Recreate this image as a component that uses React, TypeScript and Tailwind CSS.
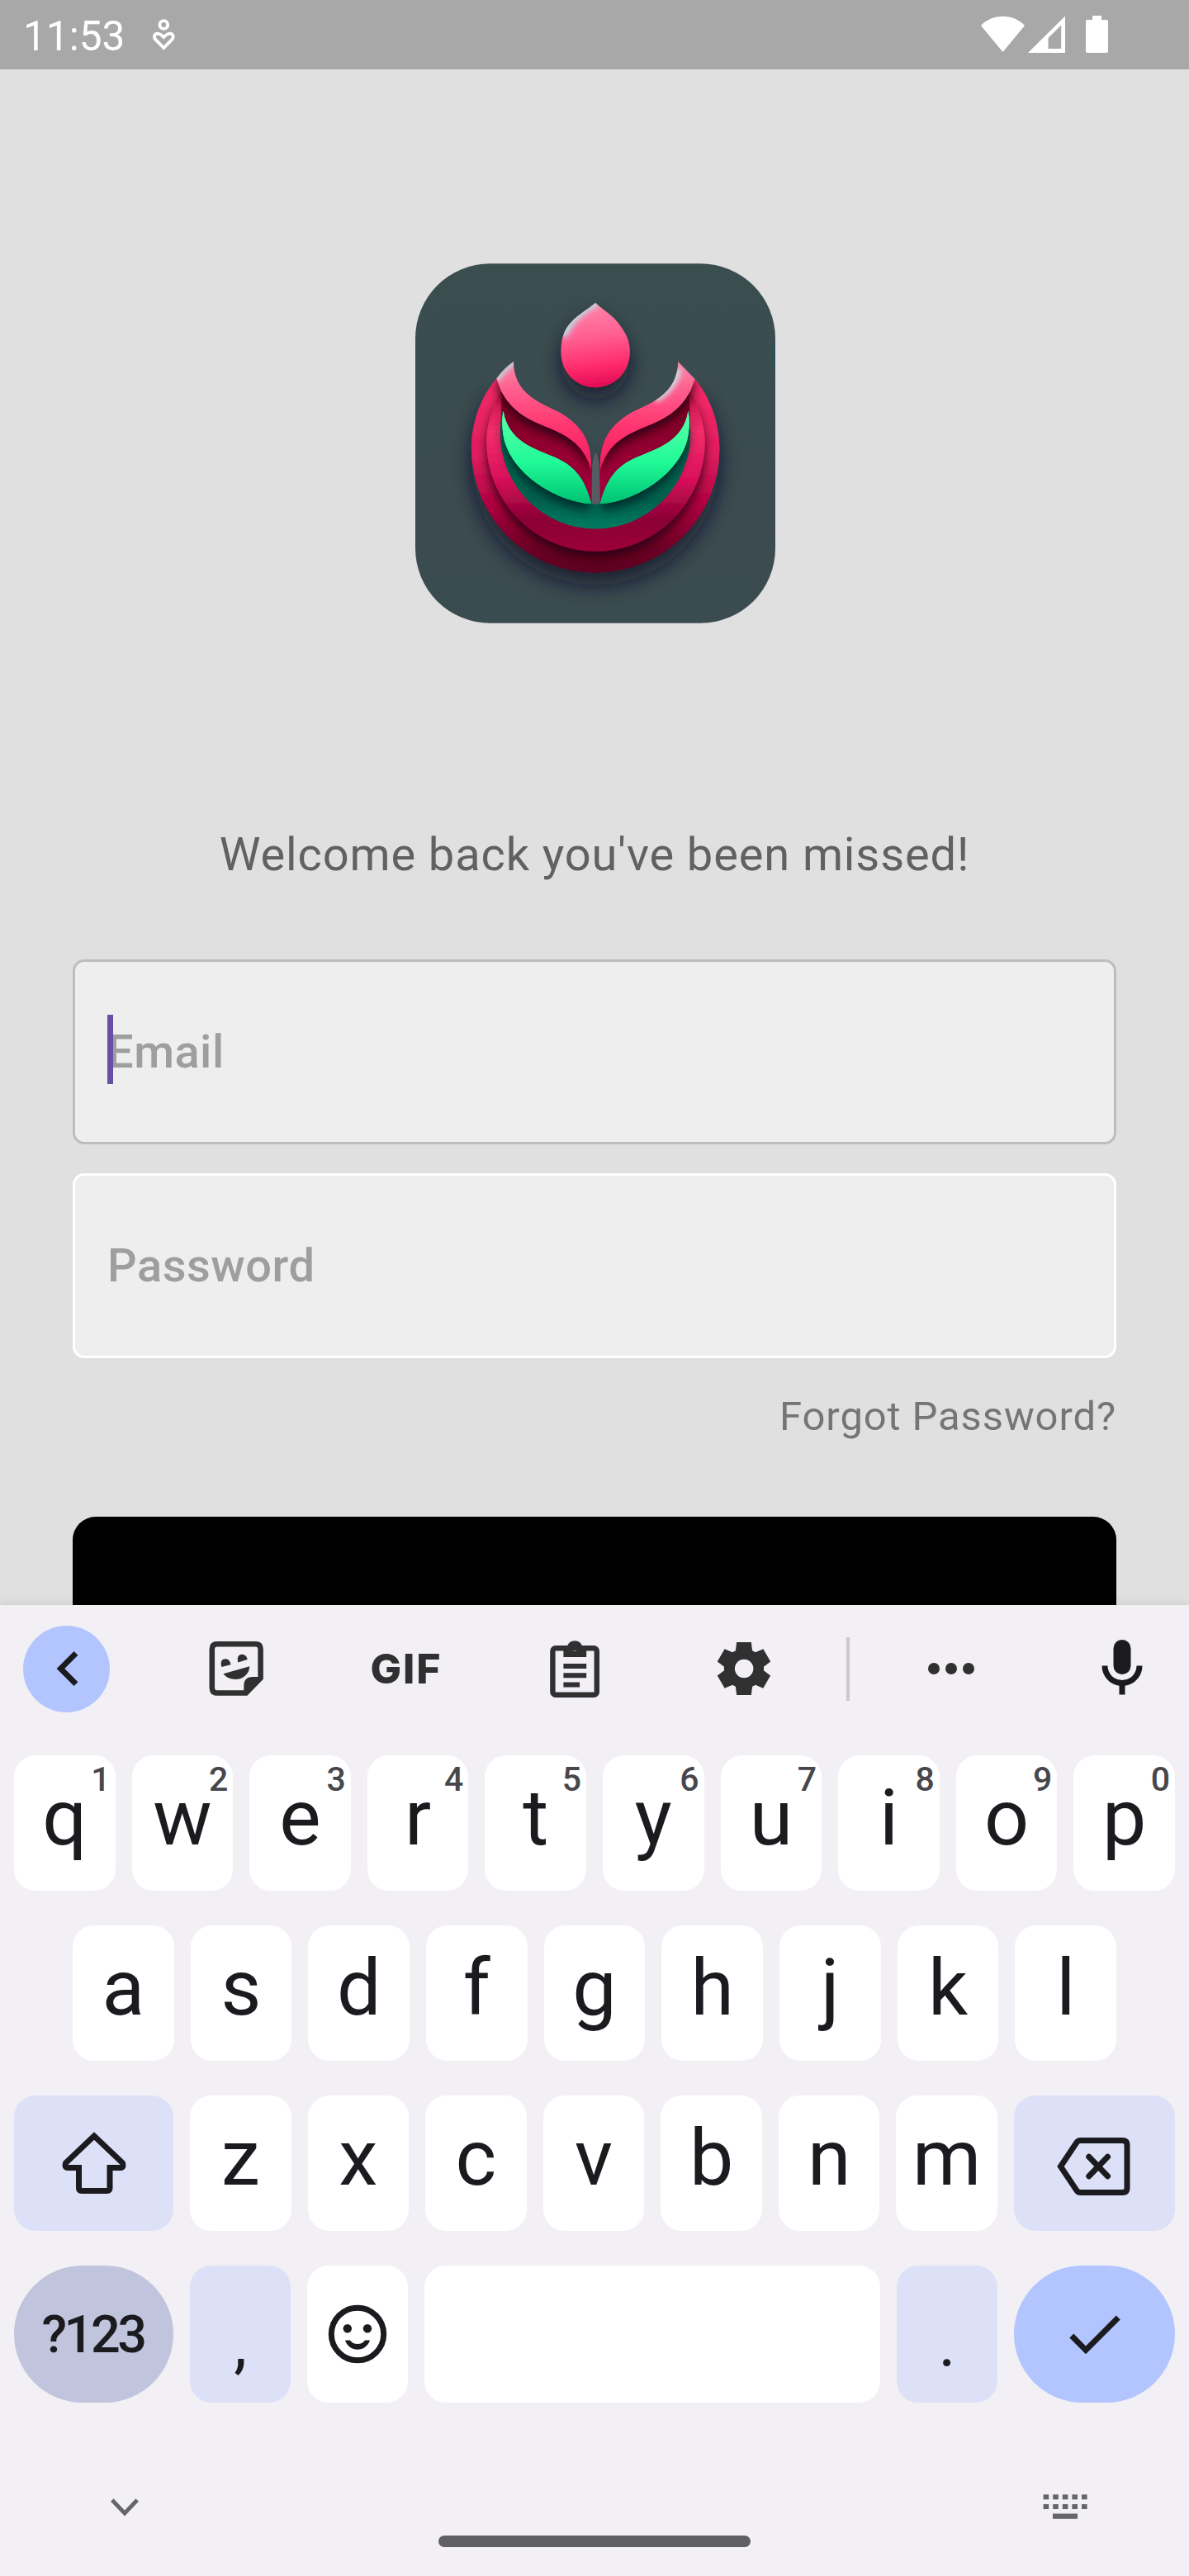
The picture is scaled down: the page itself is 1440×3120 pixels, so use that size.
import React from "react";

const INK = "#1b1b1f";
const TOOL = "#303030";

function StatusBar() {
  return (
    <header className="flex h-[84px] shrink-0 items-center bg-[#a8a8a8] text-white">
      <span className="ml-[28px] w-[150px] pt-[4px] text-[49.5px] leading-[49px]">11:53</span>
      <svg className="ml-[5px] h-[40px] w-[30px]" viewBox="182 22 30 40" fill="none" stroke="#fff" strokeWidth="3.8">
        <circle cx="197.3" cy="30" r="4.9" />
        <path d="M197.3 58 L187.6 48.2 C184.6 45 185.8 40.8 190 40.6 C193.4 40.6 194.6 42.6 197.3 45 C200 42.6 201.2 40.6 204.6 40.6 C208.8 40.8 210 45 207 48.2 Z" />
      </svg>
      <svg className="ml-auto mr-[97px] h-[46px] w-[156px]" viewBox="1187 19 156 46" fill="#fff">
        <path d="M1188 31 C1202 16 1227 16 1241 31 L1214.5 63 Z" />
        <path fillRule="evenodd" d="M1245 64 L1290 19.5 V64 Z M1269.5 46 V59 H1285.2 V30.5 Z" />
        <path d="M1323 19 H1334 V24 H1340 Q1342 24 1342 26 V62 Q1342 64 1340 64 H1317 Q1315 64 1315 62 V26 Q1315 24 1317 24 H1323 Z" />
      </svg>
    </header>
  );
}

const NOTCH_TOP =
  "C995 530 905 560 830 595 C740 645 705 710 710 810 L710 930 L680 930 L680 810 C685 710 650 645 560 595 C490 560 400 530 397 413";
const NOTCH_LOW =
  "C990 610 920 630 850 660 C780 690 730 730 710 810 L710 930 L680 930 L680 810 C660 730 610 690 540 660 C470 630 400 610 352 520";

function Logo() {
  return (
    <svg className="ml-[2px] h-[436px] w-[436px] shrink-0" viewBox="40 57 1309 1307">
      <defs>
        <linearGradient id="card" x1="0" y1="0" x2="0" y2="1">
          <stop offset="0" stopColor="#3a4d4f" />
          <stop offset="0.75" stopColor="#3b4b50" />
          <stop offset="1" stopColor="#3a4c4f" />
        </linearGradient>
        <linearGradient id="drop" x1="0.45" y1="0" x2="0.55" y2="1">
          <stop offset="0" stopColor="#ff86ab" />
          <stop offset="0.4" stopColor="#ff5f92" />
          <stop offset="0.75" stopColor="#ff2a6c" />
          <stop offset="1" stopColor="#e00a55" />
        </linearGradient>
        <linearGradient id="petal" gradientUnits="userSpaceOnUse" x1="0" y1="413" x2="0" y2="810">
          <stop offset="0" stopColor="#f58aab" />
          <stop offset="0.25" stopColor="#ff5f8e" />
          <stop offset="0.6" stopColor="#ff3570" />
          <stop offset="1" stopColor="#f01a5c" />
        </linearGradient>
        <linearGradient id="ring1" gradientUnits="userSpaceOnUse" x1="0" y1="475" x2="0" y2="1180">
          <stop offset="0" stopColor="#f52a68" />
          <stop offset="0.4" stopColor="#e01c60" />
          <stop offset="0.65" stopColor="#b00040" />
          <stop offset="0.87" stopColor="#6e0026" />
          <stop offset="1" stopColor="#5c0020" />
        </linearGradient>
        <linearGradient id="ring2" gradientUnits="userSpaceOnUse" x1="0" y1="520" x2="0" y2="1103">
          <stop offset="0" stopColor="#c01048" />
          <stop offset="0.25" stopColor="#f52d6c" />
          <stop offset="0.55" stopColor="#d8105a" />
          <stop offset="0.8" stopColor="#8a0034" />
          <stop offset="1" stopColor="#9c0038" />
        </linearGradient>
        <linearGradient id="dark" gradientUnits="userSpaceOnUse" x1="0" y1="560" x2="0" y2="900">
          <stop offset="0" stopColor="#7d0026" />
          <stop offset="0.6" stopColor="#980034" />
          <stop offset="1" stopColor="#b00040" />
        </linearGradient>
        <linearGradient id="moss" gradientUnits="userSpaceOnUse" x1="0" y1="600" x2="0" y2="1020">
          <stop offset="0" stopColor="#006b50" />
          <stop offset="0.75" stopColor="#00624e" />
          <stop offset="1" stopColor="#007a60" />
        </linearGradient>
        <linearGradient id="leaf" gradientUnits="userSpaceOnUse" x1="0" y1="595" x2="0" y2="930">
          <stop offset="0" stopColor="#5cffa8" />
          <stop offset="0.55" stopColor="#20fa98" />
          <stop offset="1" stopColor="#00c272" />
        </linearGradient>
        <filter id="far" x="-40%" y="-40%" width="180%" height="190%">
          <feDropShadow dx="0" dy="45" stdDeviation="38" floodColor="#101828" floodOpacity="0.75" />
        </filter>
        <filter id="near" x="-30%" y="-30%" width="160%" height="170%">
          <feDropShadow dx="0" dy="24" stdDeviation="17" floodColor="#26000e" floodOpacity="0.85" />
        </filter>
        <filter id="leafShade" x="-30%" y="-30%" width="160%" height="170%">
          <feDropShadow dx="0" dy="26" stdDeviation="18" floodColor="#06262c" floodOpacity="0.9" />
        </filter>
        <filter id="soft" x="-50%" y="-50%" width="200%" height="200%">
          <feGaussianBlur stdDeviation="9" />
        </filter>
        <path id="dropShape" d="M695 199 C722 226 760 242 789 288 C812 322 820 345 820 378 C820 450 765 507 695 507 C625 507 570 450 570 380 C570 340 576 314 592 288 C620 246 668 224 695 199 Z" />
        <path id="petalShape" d="M397 413 C400 530 490 560 560 595 C650 645 685 710 680 810 C660 730 610 690 540 660 C470 630 400 610 352 520 L335 475 Q362 436 397 413 Z" />
        <path id="leafShape" d="M360 593 C375 690 450 722 520 750 C600 780 650 815 680 930 C560 924 400 830 364 700 C354 655 355 620 360 593 Z" />
        <clipPath id="clipDrop"><use href="#dropShape" /></clipPath>
        <clipPath id="clipPetal"><use href="#petalShape" /></clipPath>
        <clipPath id="clipRing">
          <path d={"M335 475 C280 540 244 630 244 730 A451 451 0 0 0 1146 730 C1146 630 1110 540 1055 475 L995 413 " + NOTCH_TOP + " Z"} />
        </clipPath>
      </defs>
      <rect x="40" y="57" width="1309" height="1307" rx="272" fill="url(#card)" />
      <path d="M1346 330 Q1336 390 1346 460 Z" fill="#0e5a70" />

      <use href="#dropShape" fill="url(#drop)" filter="url(#far)" />
      <g clipPath="url(#clipDrop)">
        <path d="M575 320 Q610 235 700 195" fill="none" stroke="#b9dbe2" strokeWidth="34" filter="url(#soft)" />
      </g>

      <path
        d={"M335 475 C280 540 244 630 244 730 A451 451 0 0 0 1146 730 C1146 630 1110 540 1055 475 L1040 520 " + NOTCH_LOW + " Z"}
        fill="url(#ring1)"
        filter="url(#far)"
      />
      <g clipPath="url(#clipRing)">
        <path
          d={"M352 520 C320 580 299 640 299 706 A397 397 0 0 0 1093 706 C1093 640 1070 580 1040 520 " + NOTCH_LOW + " Z"}
          fill="url(#ring2)"
          filter="url(#near)"
        />
        <path
          d={"M354 522 C354 580 350 620 350 676 A345 345 0 0 0 1040 676 C1040 620 1036 580 1036 522 " + NOTCH_LOW + " Z"}
          fill="url(#dark)"
        />
        <path
          d="M358 590 C350 620 350 650 350 676 A345 345 0 0 0 1040 676 C1040 650 1040 620 1032 590 C1010 780 850 920 710 930 H680 C540 920 380 780 358 590 Z"
          fill="url(#moss)"
        />
        <use href="#leafShape" fill="url(#leaf)" filter="url(#leafShade)" />
        <use href="#leafShape" fill="url(#leaf)" filter="url(#leafShade)" transform="translate(1392 0) scale(-1 1)" />
        <use href="#petalShape" fill="url(#petal)" filter="url(#near)" />
        <use href="#petalShape" fill="url(#petal)" filter="url(#near)" transform="translate(1392 0) scale(-1 1)" />
        <use href="#leafShape" fill="url(#leaf)" />
        <use href="#leafShape" fill="url(#leaf)" transform="translate(1392 0) scale(-1 1)" />
      </g>
      <path d="M683 790 L681 931 H712 L709 790 Q696 700 683 790 Z" fill="#565c62" />
      <g clipPath="url(#clipPetal)">
        <path d="M330 480 Q355 435 400 405" fill="none" stroke="#c9d4da" strokeWidth="30" filter="url(#soft)" />
      </g>
      <g transform="translate(1392 0) scale(-1 1)" clipPath="url(#clipPetal)">
        <path d="M396 440 Q410 510 480 550" fill="none" stroke="#cfdde2" strokeWidth="26" filter="url(#soft)" />
      </g>
    </svg>
  );
}

function LoginScreen() {
  return (
    <main className="flex h-[1860px] shrink-0 flex-col items-center overflow-hidden px-[88px] pt-[235px]">
      <Logo />
      <p className="mt-[247px] text-[56px] leading-[66px] tracking-[0.875px] whitespace-nowrap text-[#616161]">
        Welcome back you've been missed!
      </p>
      <div className="relative mt-[94px] flex h-[224px] w-full shrink-0 items-center rounded-[14px] border-[3.5px] border-[#bdbdbd] bg-[#eeeeee] pl-[39px]">
        <span className="text-[56px] leading-[66px] font-medium tracking-[0.5px] text-[#9e9e9e]">Email</span>
        <span className="absolute top-[64px] left-[39px] h-[84px] w-[7px] bg-[#6750a4]" />
      </div>
      <div className="mt-[35px] flex h-[224px] w-full shrink-0 items-center rounded-[14px] border-[3.5px] border-white bg-[#eeeeee] pl-[39px]">
        <span className="text-[56px] leading-[66px] font-medium tracking-[0.5px] text-[#9e9e9e]">Password</span>
      </div>
      <p className="mt-[42px] self-end text-[49px] leading-[58px] tracking-[0.875px] whitespace-nowrap text-[#757575]">
        Forgot Password?
      </p>
      <div className="mt-[92px] h-[240px] w-full shrink-0 rounded-[28px] bg-black" />
    </main>
  );
}

function Toolbar() {
  return (
    <div className="flex h-[154px] items-center">
      <div className="ml-[28px] flex size-[105px] shrink-0 items-center justify-center rounded-full bg-[#b3c5ff]">
        <svg className="size-[50px]" viewBox="55 1996 50 50" fill="none" stroke={INK} strokeWidth="6.8">
          <path d="M91 2002.4 L72.4 2021 L91 2039.6" />
        </svg>
      </div>
      <svg className="ml-[111px] size-[84px] shrink-0" viewBox="244 1979 84 84">
        <path
          d="M263 1991.3 H309.5 Q315.6 1991.3 315.6 1997.5 V2032.5 L298 2050.5 H263 Q256.8 2050.5 256.8 2044.3 V1997.5 Q256.8 1991.3 263 1991.3 Z"
          fill="none"
          stroke={TOOL}
          strokeWidth="6.5"
        />
        <path d="M295.3 2049 V2042 Q295.3 2031 306 2031 H317 V2034 L299 2052 Z" fill={TOOL} />
        <path d="M268.3 2019 C266.5 2012 269 2009.3 273 2009.3 C276.5 2009.3 279 2012 279.4 2016.2 Z" fill={TOOL} />
        <path d="M288.3 2013.4 C286.5 2006.5 289.5 2003.8 293 2003.8 C297 2003.8 299.5 2007 299.5 2010 Z" fill={TOOL} />
        <path d="M270.5 2027.3 L302.2 2018.3 C302 2027 295 2034 285.5 2034 C279 2034 273.5 2031.5 270.5 2027.3 Z" fill={TOOL} />
      </svg>
      <span className="ml-[121px] flex h-[84px] w-[84px] shrink-0 items-center justify-center pl-[2px] font-['Inter',sans-serif] text-[50px] leading-[50px] font-extrabold tracking-[2px] text-[#303030]">
        GIF
      </span>
      <svg className="ml-[121px] size-[84px] shrink-0" viewBox="653.6 1979 84 84">
        <rect x="669" y="1996.2" width="53.4" height="56.6" rx="3.5" fill="none" stroke={TOOL} strokeWidth="6.4" />
        <path
          fillRule="evenodd"
          d="M682 2007 V1994 H686.5 A9.6 9.6 0 0 1 704.9 1994 H709.8 V2007 Z M695.7 1993 A3.5 3.5 0 1 0 695.7 2000 A3.5 3.5 0 1 0 695.7 1993 Z"
          fill={TOOL}
        />
        <path d="M682 2018 H709.8 M682 2029.2 H709.8 M682 2040.5 H701.7" stroke={TOOL} strokeWidth="6" />
      </svg>
      <svg className="ml-[121px] size-[84px] shrink-0" viewBox="-1.1 -1.1 26.2 26.2" fill={TOOL}>
        <path d="m9.25 22-.4-3.2q-.325-.125-.612-.3-.288-.175-.563-.375L4.7 19.375l-2.75-4.75 2.575-1.95Q4.5 12.5 4.5 12.337v-.675q0-.162.025-.337L1.95 9.375l2.75-4.75 2.975 1.25q.275-.2.575-.375.3-.175.6-.3l.4-3.2h5.5l.4 3.2q.325.125.613.3.287.175.562.375l2.975-1.25 2.75 4.75-2.575 1.95q.025.175.025.337v.675q0 .163-.05.338l2.575 1.95-2.75 4.75-2.95-1.25q-.275.2-.575.375-.3.175-.6.3l-.4 3.2Zm2.8-6.5q1.45 0 2.475-1.025Q15.55 13.45 15.55 12q0-1.45-1.025-2.475Q13.5 8.5 12.05 8.5q-1.475 0-2.488 1.025Q8.55 10.55 8.55 12q0 1.45 1.012 2.475Q10.575 15.5 12.05 15.5Z" />
      </svg>
      <div className="ml-[82px] h-[77px] w-[4px] shrink-0 bg-[#cac9cf]" />
      <svg className="ml-[81px] size-[84px] shrink-0" viewBox="0 0 84 84" fill={TOOL}>
        <circle cx="21" cy="42" r="7" />
        <circle cx="42" cy="42" r="7" />
        <circle cx="63" cy="42" r="7" />
      </svg>
      <svg className="ml-[123px] size-[84px] shrink-0" viewBox="0 0 24 24" fill={INK}>
        <path d="M12 14q-1.25 0-2.125-.875T9 11V5q0-1.25.875-2.125T12 2q1.25 0 2.125.875T15 5v6q0 1.25-.875 2.125T12 14Zm-1 7v-3.1q-2.6-.35-4.3-2.325Q5 13.6 5 11h2q0 2.075 1.463 3.537Q9.925 16 12 16t3.538-1.463Q17 13.075 17 11h2q0 2.6-1.7 4.575-1.7 1.975-4.3 2.325V21Z" />
      </svg>
    </div>
  );
}

function Key({ label, hint }: { label: string; hint?: string }) {
  return (
    <div className="relative flex min-w-0 flex-1 items-center justify-center rounded-[26px] bg-white pb-[13px] text-[95px] leading-[95px]">
      {label}
      {hint && (
        <span className="absolute top-[9px] right-[6px] text-[41px] leading-[41px] font-medium text-[#47474b]">{hint}</span>
      )}
    </div>
  );
}

function Keyboard() {
  return (
    <section className="flex flex-1 flex-col bg-[#f2f0f5] text-[#1b1b1f] shadow-[0_0_12px_rgba(0,0,0,0.12)]">
      <Toolbar />
      <div className="mt-[28px] flex h-[164px] gap-5 px-[17px]">
        {"qwertyuiop".split("").map((c, i) => (
          <Key key={c} label={c} hint={String((i + 1) % 10)} />
        ))}
      </div>
      <div className="mt-[42px] flex h-[164px] gap-5 px-[88px]">
        {"asdfghjkl".split("").map((c) => (
          <Key key={c} label={c} />
        ))}
      </div>
      <div className="mt-[42px] flex h-[164px] gap-5 px-[17px]">
        <div className="flex w-[193px] shrink-0 items-center justify-center rounded-[26px] bg-[#dde1f8]">
          <svg className="size-[84px]" viewBox="71 2578 84 84" fill="none" stroke={INK} strokeWidth="7" strokeLinejoin="miter">
            <path d="M113 2587 L78.6 2619.6 Q76.5 2625.4 81 2625.4 H94.5 V2650 Q94.5 2653.4 98 2653.4 H128.5 Q132 2653.4 132 2650 V2625.4 H145 Q149.5 2625.4 147.4 2619.6 Z" />
          </svg>
        </div>
        {"zxcvbnm".split("").map((c) => (
          <Key key={c} label={c} />
        ))}
        <div className="flex w-[195px] shrink-0 items-center justify-center rounded-[26px] bg-[#dde1f8]">
          <svg className="mt-[7px] h-[84px] w-[100px]" viewBox="1275.5 2581.7 100 84" fill="none" stroke={INK} strokeWidth="7">
            <path d="M1284 2623.7 L1303.5 2594.5 Q1305 2592.2 1308 2592.2 H1359 Q1364.5 2592.2 1364.5 2597.5 V2650 Q1364.5 2655.2 1359 2655.2 H1308 Q1305 2655.2 1303.5 2652.9 Z" />
            <path d="M1318.3 2612 L1341 2635.4 M1341 2612 L1318.3 2635.4" strokeLinecap="round" />
          </svg>
        </div>
      </div>
      <div className="mt-[42px] flex h-[166px] gap-5 px-[17px]">
        <div className="flex w-[193px] shrink-0 items-center justify-center rounded-full bg-[#c0c5dd] pr-[2px] text-[63px] leading-[63px] font-medium tracking-[-3.5px]">
          ?123
        </div>
        <div className="flex w-[122px] shrink-0 items-end justify-center rounded-[26px] bg-[#dde1f8] pb-[31px] text-[80px] leading-[80px]">
          ,
        </div>
        <div className="flex w-[122px] shrink-0 items-center justify-center rounded-[26px] bg-white">
          <svg className="size-[84px]" viewBox="391 2785 84 84" fill="none" stroke={INK} strokeWidth="7">
            <circle cx="433" cy="2827" r="31.7" />
            <circle cx="420.8" cy="2820.3" r="5.2" fill={INK} stroke="none" />
            <circle cx="445" cy="2820.3" r="5.2" fill={INK} stroke="none" />
            <path d="M418 2834.5 C423 2849.5 443 2849.5 448 2834.5 H442 C438 2840.5 428 2840.5 424 2834.5 Z" fill={INK} stroke="none" />
          </svg>
        </div>
        <div className="flex-1 rounded-[26px] bg-white" />
        <div className="flex w-[122px] shrink-0 items-end justify-center rounded-[26px] bg-[#dde1f8] pb-[31px] text-[80px] leading-[80px]">
          .
        </div>
        <div className="flex w-[195px] shrink-0 items-center justify-center rounded-full bg-[#b3c5ff]">
          <svg className="size-[84px]" viewBox="1283.5 2785 84 84" fill="none" stroke={INK} strokeWidth="7">
            <path d="M1297.3 2829 L1314.5 2846.4 L1353.8 2807" />
          </svg>
        </div>
      </div>
      <div className="flex h-[161px] items-start justify-between pt-[109px] pr-[121px] pl-[131px]">
        <svg className="mt-[4px] h-[28px] w-[40px]" viewBox="131 3023 40 28" fill="none" stroke="#66666a" strokeWidth="4.8">
          <path d="M135.8 3028 L151 3044 L166.2 3028" />
        </svg>
        <svg className="h-[35px] w-[58px]" viewBox="1261 3019 58 35" fill="#66666a">
          {[1263.6, 1275.2, 1286.8, 1298.4, 1310].map((x) => (
            <React.Fragment key={x}>
              <rect x={x} y="3021.3" width="6.6" height="6" />
              <rect x={x} y="3033" width="6.6" height="6" />
            </React.Fragment>
          ))}
          <rect x="1275" y="3044.5" width="30" height="6.3" />
        </svg>
      </div>
      <div className="mx-auto h-[14px] w-[378px] rounded-full bg-[#606062]" />
    </section>
  );
}

export default function App() {
  return (
    <div className="flex h-[3120px] w-[1440px] flex-col overflow-hidden bg-[#e0e0e0] font-['Roboto',sans-serif]">
      <StatusBar />
      <LoginScreen />
      <Keyboard />
    </div>
  );
}
